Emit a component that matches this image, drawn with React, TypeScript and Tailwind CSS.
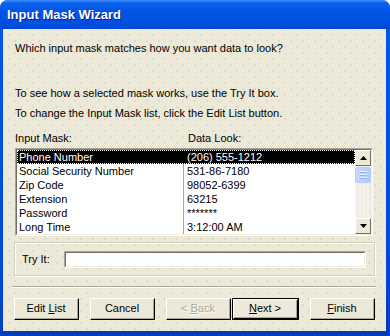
import clsx from 'clsx';

const rows = [
  ['Phone Number', '(206) 555-1212'],
  ['Social Security Number', '531-86-7180'],
  ['Zip Code', '98052-6399'],
  ['Extension', '63215'],
  ['Password', '*******'],
  ['Long Time', '3:12:00 AM'],
];

const dots =
  'bg-[#ECE9D8] bg-[radial-gradient(circle,#cdc9b8_0.6px,transparent_0.8px),radial-gradient(circle,#cdc9b8_0.6px,transparent_0.8px)] bg-[length:12px_12px] bg-[position:0_0,6px_6px]';

function Btn({
  children,
  className,
  primary,
  disabled,
}: {
  children: React.ReactNode;
  className?: string;
  primary?: boolean;
  disabled?: boolean;
}) {
  return (
    <div
      className={clsx(
        'h-[22px] w-[65px] flex items-center justify-center bg-[#ECE9D8]',
        primary ? 'border border-black' : '',
        className
      )}
    >
      <div className="w-full h-full border-t border-l border-white border-b border-r border-b-black border-r-black">
        <div
          className={clsx(
            'w-full h-full flex items-center justify-center border-b border-r border-[#ACA899]',
            disabled ? 'text-[#ACA899] [text-shadow:1px_1px_0_#fff]' : 'text-black'
          )}
        >
          <span className="whitespace-pre">{children}</span>
        </div>
      </div>
    </div>
  );
}

function Arrow({ up }: { up?: boolean }) {
  return (
    <div className="w-[16px] h-[16px] bg-[#ECE9D8] border-t border-l border-white border-b border-r border-b-[#716F64] border-r-[#716F64] flex items-center justify-center">
      <svg width="7" height="4" viewBox="0 0 7 4">
        <path d={up ? 'M3.5 0L7 4H0z' : 'M0 0h7L3.5 4z'} fill="#000" />
      </svg>
    </div>
  );
}

export default function App() {
  return (
    <div
      className="w-[390px] h-[336px] flex flex-col rounded-t-[8px] bg-[linear-gradient(#0058EE,#0055E5_15%,#0046D5_85%,#003DB8)] text-[11px] text-black"
      style={{ fontFamily: '"Liberation Sans", Arial, sans-serif' }}
    >
      <div className="h-[29px] shrink-0 flex items-center pl-[7px] rounded-t-[8px] bg-[linear-gradient(#3A8CFF,#0A5FEA_12%,#0055E5_40%,#0050E0_80%,#0046D5)]">
        <span className="text-white font-bold text-[13px] [text-shadow:1px_1px_0_#0A1E8C]">
          Input Mask Wizard
        </span>
      </div>
      <div className={clsx('flex-1 ml-[3px] mr-[4px] mb-[5px] flex flex-col', dots)}>
        <p className="mt-[13px] ml-[12px] leading-[13px]">
          Which input mask matches how you want data to look?
        </p>
        <p className="mt-[32px] ml-[12px] leading-[13px]">
          To see how a selected mask works, use the Try It box.
        </p>
        <p className="mt-[7px] ml-[12px] leading-[13px]">
          To change the Input Mask list, click the Edit List button.
        </p>
        <div className="mt-[12px] ml-[12px] flex leading-[13px]">
          <span className="w-[173px]">Input Mask:</span>
          <span>Data Look:</span>
        </div>
        <div className="mt-[3px] ml-[12px] w-[358px] h-[88px] border-t border-l border-[#ACA899] border-b border-r border-b-white border-r-white">
          <div className="w-full h-full border-t border-l border-[#716F64] border-b border-r border-b-[#F1EFE2] border-r-[#F1EFE2] bg-white flex">
            <div className="flex-1 flex flex-col relative">
              <div className="absolute left-[166px] top-0 bottom-0 w-px bg-[#ACA899]" />
              {rows.map(([a, b], i) => (
                <div
                  key={a}
                  className={clsx(
                    'h-[14px] flex items-center leading-[14px] relative',
                    i === 0 ? 'bg-black text-white outline outline-1 outline-dotted outline-white -outline-offset-1' : ''
                  )}
                >
                  <span className="w-[167px] pl-[2px] whitespace-nowrap">{a}</span>
                  <span className="pl-[3px] whitespace-nowrap">{b}</span>
                </div>
              ))}
            </div>
            <div className="w-[16px] flex flex-col bg-[#F4F3EE]">
              <Arrow up />
              <div className="mt-px h-[16px] rounded-[2px] border border-[#B8CCF5] bg-[linear-gradient(90deg,#C6D8FC,#B6CAF7)] flex flex-col items-center justify-center gap-[1px]">
                <div className="w-[7px] h-px bg-[#EEF4FE] border-b border-[#8CB0F8] box-content" />
                <div className="w-[7px] h-px bg-[#EEF4FE] border-b border-[#8CB0F8] box-content" />
                <div className="w-[7px] h-px bg-[#EEF4FE] border-b border-[#8CB0F8] box-content" />
              </div>
              <div className="flex-1 bg-[repeating-linear-gradient(90deg,#F4F3EE,#F4F3EE_2px,#EDEBE3_2px,#EDEBE3_4px)]" />
              <Arrow />
            </div>
          </div>
        </div>
        <div className="mt-[6px] ml-[11px] w-[361px] h-[34px] border border-[#D0D0BF] shadow-[inset_1px_1px_0_#fff,1px_1px_0_#fff] flex items-center">
          <span className="ml-[7px] w-[42px]">Try It:</span>
          <div className="w-[302px] h-[17px] border-t border-l border-[#ACA899] border-b border-r border-b-white border-r-white">
            <div className="w-full h-full border-t border-l border-[#716F64] border-b border-r border-b-[#F1EFE2] border-r-[#F1EFE2] bg-white" />
          </div>
        </div>
        <div className="mt-[10px] ml-[9px] w-[364px] h-[2px] border-t border-[#ACA899] border-b border-b-white" />
        <div className="mt-[10px] ml-[11px] flex">
          <Btn>
            Edit <span className="underline">L</span>ist
          </Btn>
          <Btn className="ml-[11px]">Cancel</Btn>
          <Btn className="ml-[11px]" disabled>
            &lt; <span className="underline">B</span>ack
          </Btn>
          <Btn className="ml-[1px] w-[67px]" primary>
            <span className="underline">N</span>ext &gt;
          </Btn>
          <Btn className="ml-[11px]">
            <span className="underline">F</span>inish
          </Btn>
        </div>
      </div>
    </div>
  );
}
